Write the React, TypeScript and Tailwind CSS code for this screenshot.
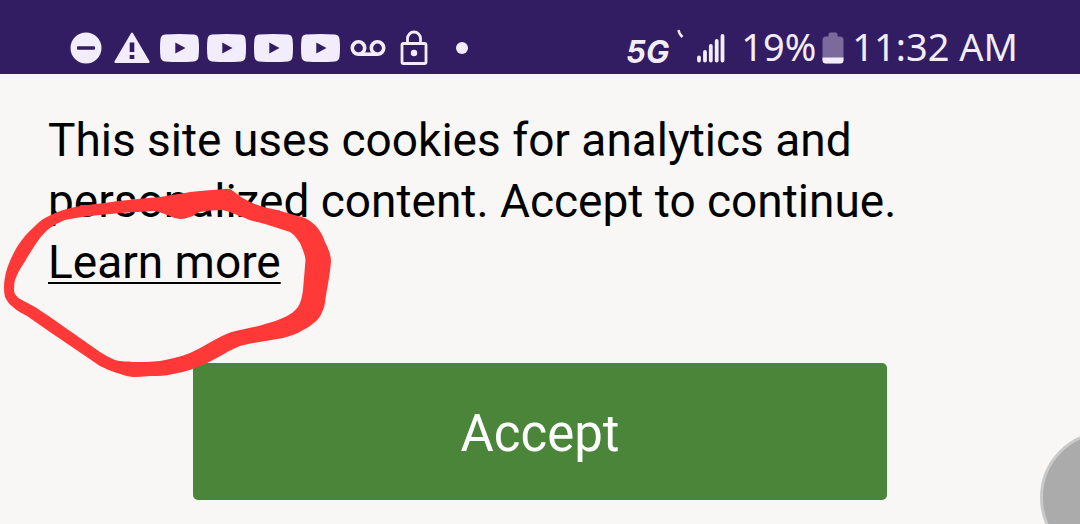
const DoNotDisturbIcon = () => (
    <svg viewBox="0 0 32 32" className="h-8 w-8" fill="currentColor">
        <path fillRule="evenodd" d="M16 .5a15.5 15.5 0 1 1 0 31a15.5 15.5 0 0 1 0-31ZM8 14.300a1 1 0 0 0-1 1v1.400a1 1 0 0 0 1 1h16a1 1 0 0 0 1-1v-1.400a1 1 0 0 0-1-1Z" />
    </svg>
);

const WarningIcon = () => (
    <svg viewBox="0 0 36 32" className="h-8 w-9" fill="currentColor">
        <path fillRule="evenodd" d="M17 1.300q1-1.600 2 0L35.300 29q.9 2-1 2H1.700q-1.900 0-1-2ZM15.700 10.500v9.500h4.600v-9.500ZM15.700 23v4h4.600v-4Z" />
    </svg>
);

const VideoIcon = () => (
    <svg viewBox="0 0 39 28" className="h-7 w-[39px]" fill="currentColor">
        <path fillRule="evenodd" d="M5 .6Q19.500-.6 34 .6Q38 1 38.500 5Q39.500 14 38.500 23Q38 27 34 27.400Q19.500 28.600 5 27.400Q1 27 .5 23Q-.5 14 .5 5Q1 1 5 .6ZM15.300 8.500v11L25.500 14Z" />
    </svg>
);

const VoicemailIcon = () => (
    <svg viewBox="0 0 36 18" className="h-[18px] w-9" fill="none" stroke="currentColor" strokeWidth="3.600">
        <circle cx="8.500" cy="9" r="6.200" />
        <circle cx="27.500" cy="9" r="6.200" />
        <path d="M8.500 15.200h19" />
    </svg>
);

const LockIcon = () => (
    <svg viewBox="0 0 28 36" className="h-9 w-7" fill="none" stroke="currentColor" strokeWidth="2.800">
        <rect x="2" y="13.500" width="24" height="20" rx="1.500" />
        <path d="M7.500 13.500V8.500a6.500 6.500 0 0 1 13 0v5" />
        <circle cx="14" cy="23" r="3.200" fill="currentColor" stroke="none" />
    </svg>
);

const SignalIcon = () => (
    <svg viewBox="0 0 28 30" className="h-[30px] w-7" stroke="currentColor" strokeWidth="3.800" strokeLinecap="round">
        <path d="M2 24.500v3M8 19v8.500M13.800 13v14.500M19.700 8v19.500M25.500 3v24.500" />
    </svg>
);

const BatteryIcon = () => (
    <svg viewBox="0 0 22 32" className="h-8 w-[22px]" fill="currentColor">
        <path
            className="text-[#7b6a9b]"
            d="M6.500 4.500V2.500q0-2 2-2h5q2 0 2 2v2h2.500q3.500 0 3.500 3.500v20q0 3.500-3.500 3.500H4Q.5 31.500.5 28V8Q.5 4.500 4 4.500Z"
        />
        <path d="M.5 25.500h21V28q0 3.500-3.500 3.500H4Q.5 31.500.5 28Z" />
    </svg>
);

const StatusBar = () => (
    <header className="flex h-[74px] items-center justify-between bg-[#321d62] pt-[22px] pr-[62px] pl-[70px] text-[#f3ecfa]">
        <div className="flex items-center gap-2">
            <DoNotDisturbIcon />
            <div className="pr-[2px] pl-1">
                <WarningIcon />
            </div>
            <VideoIcon />
            <VideoIcon />
            <VideoIcon />
            <VideoIcon />
            <div className="px-[2px]">
                <VoicemailIcon />
            </div>
            <div className="pl-1">
                <LockIcon />
            </div>
            <div className="ml-5 h-3 w-3 rounded-full bg-current" />
        </div>
        <div className="flex items-center font-['Noto_Sans',sans-serif] text-[38px] leading-10">
            <span className="pt-2 font-[Inter,sans-serif] text-[31px] font-bold italic">5G</span>
            <svg viewBox="0 0 8 10" className="mr-3 mb-7 ml-2 h-[10px] w-2" fill="none" stroke="currentColor" strokeWidth="2.400">
                <path d="M1.500 1Q2 5 5.500 8" />
            </svg>
            <SignalIcon />
            <span className="mr-1.5 ml-4 pb-1">19%</span>
            <BatteryIcon />
            <span className="ml-2 pb-1">11:32 AM</span>
        </div>
    </header>
);

const Scribble = () => (
    <svg viewBox="0 0 340 390" className="pointer-events-none absolute top-0 left-0 h-[390px] w-[340px]" fill="#ff3838">
        <path
            fillRule="evenodd"
            d="M4 288C4 273 10 259 17 247C22 239 28 232 35 226C40 221 44 218 50 215.500C58 211 67 209 75 207C85 205 95 204 105 203C122 200 140 199 160 197C174 195 187 192 200 191L225 189Q230 188 233 191Q241 198 250 202C259 206 268 208 277 210L305 218Q311 221 315 225C320 230 323 236 325 242C328 248 331 254 331 262C330 273 328 284 326 295C325 301 325 306 323 310C321 315 319 319 315 322C311 325 308 328 303 330C297 334 290 336 283 338C268 341 254 342 240 346C229 350 218 358 207 363C196 368 185 372 173 374C165 376 158 376 150 376Q141 377 133 377Q125 376 117 373C111 371 106 369 100 366L50 332L27 316C22 313 17 311 13 307C9 304 7 301 5 297Q4 293 4 288Z
               M14 289C14 294 16 296 20 299C25 302 30 304 35 307L50 317L100 352C105 355 110 358 115 360C121 362 127 361 133 362C142 362 151 362 160 361C170 359 180 357 190 353C201 348 212 341 222 336C228 333 234 331 240 330C248 328 257 327 265 324C272 322 279 320 285 317C291 314 295 311 298 307C301 302 302 297 303 290L305.500 260C305 254 302 248 300 243C297 239 295 235 290 232C282 229 273 227 265 224C258 222 251 221 245 218Q239 216 235 214Q228 211 222 210Q210 210 200 212C196 213 194 216 190 217Q185 219 180 219Q175 219 170 216Q160 212 155 211L120 213L90 216C81 217 73 218 65 220Q57 223 50 228C46 231 43 234 40 238C35 245 29 254 24 263C20 269 17 274 15 280Q14 284 14 289Z"
        />
    </svg>
);

const CookieNotice = () => (
    <main className="px-12 pt-9 pb-6">
        <p className="text-[46px] leading-[61px] text-black">
            This site uses cookies for analytics and
            <br />
            personalized content. Accept to continue.
            <br />
            <a href="#learn-more" className="underline decoration-2 underline-offset-4">
                Learn more
            </a>
        </p>
        <div className="mt-[70px] flex px-[145px]">
            <button type="button" className="grow rounded-[5px] bg-[#4b853a] pt-[34px] pb-[30px] text-[51px] leading-[73px] text-white">
                Accept
            </button>
        </div>
    </main>
);

const App = () => {
    return (
        <div className="relative min-h-screen overflow-hidden bg-[#f8f7f5] font-[Roboto,sans-serif]">
            <StatusBar />
            <CookieNotice />
            <Scribble />
            <button
                type="button"
                aria-label="Menu"
                className="absolute -right-[93px] -bottom-10 h-[133px] w-[133px] rounded-full border-3 border-[#c9c9c9] bg-[#ababab]"
            />
        </div>
    );
};

export default App;
